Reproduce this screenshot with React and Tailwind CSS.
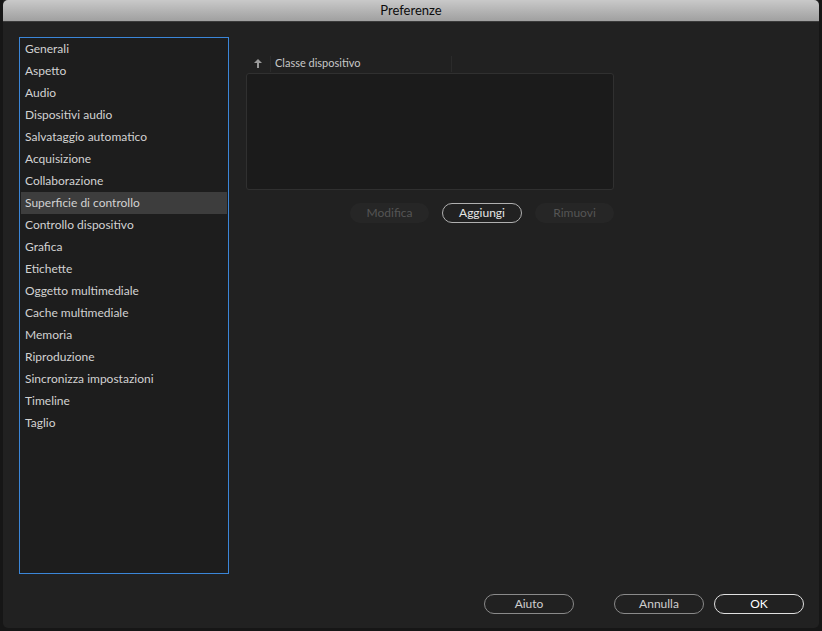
import React, { useState } from "react";

const categories = [
    "Generali",
    "Aspetto",
    "Audio",
    "Dispositivi audio",
    "Salvataggio automatico",
    "Acquisizione",
    "Collaborazione",
    "Superficie di controllo",
    "Controllo dispositivo",
    "Grafica",
    "Etichette",
    "Oggetto multimediale",
    "Cache multimediale",
    "Memoria",
    "Riproduzione",
    "Sincronizza impostazioni",
    "Timeline",
    "Taglio",
];

const PillButton = ({ label, variant = "normal", className = "" }) => {
    const styles = {
        normal: "border border-[#8a8a8a] text-[#cfcfcf]",
        strong: "border border-[#e0e0e0] text-white",
        disabled: "bg-[#262626] text-[#555555]",
    };
    return (
        <button
            className={`h-[20px] rounded-full text-[12px] leading-none flex items-center justify-center ${styles[variant]} ${className}`}
        >
            {label}
        </button>
    );
};

const App = () => {
    const [selected, setSelected] = useState("Superficie di controllo");

    return (
        <div
            className="w-[822px] h-[631px] bg-[#161616] flex px-[3px] overflow-hidden"
            style={{ fontFamily: "Lato, 'Open Sans', sans-serif" }}
        >
            <div className="flex-1 h-[628px] flex flex-col bg-[#212121] rounded-b-[5px]">
                {/* Barra del titolo */}
                <div className="h-[22px] rounded-t-[5px] bg-gradient-to-b from-[#c9c9c9] to-[#a0a0a0] border-b border-[#3a3a3a] flex items-center justify-center">
                    <span className="text-[13px] text-[#0c0c0c]">Preferenze</span>
                </div>

                <div className="flex-1 flex flex-col pt-[15px] pb-[14px]">
                    <div className="flex flex-1">
                        {/* Lista categorie */}
                        <div className="ml-[16px] w-[210px] h-[537px] border border-[#3b86d8] bg-[#1d1d1d] px-[1px]">
                            {categories.map((category) => (
                                <div
                                    key={category}
                                    onClick={() => setSelected(category)}
                                    className={`h-[22px] flex items-center pl-[4px] text-[12px] text-[#d2d2d2] cursor-default ${
                                        selected === category ? "bg-[#3d3d3d]" : ""
                                    }`}
                                >
                                    {category}
                                </div>
                            ))}
                        </div>

                        {/* Pannello destro */}
                        <div className="ml-[17px] w-[368px] pt-[18px]">
                            <div className="h-[17px] flex items-center">
                                <div className="w-[24px] flex justify-center">
                                    <svg width="8" height="9" viewBox="0 0 8 9">
                                        <path d="M4 0 L8 4 L5 4 L5 9 L3 9 L3 4 L0 4 Z" fill="#9a9a9a" />
                                    </svg>
                                </div>
                                <div className="w-px h-[16px] bg-[#2b2b2b]" />
                                <span className="pl-[4px] text-[11px] text-[#c8c8c8] w-[180px]">
                                    Classe dispositivo
                                </span>
                                <div className="w-px h-[16px] bg-[#2b2b2b]" />
                            </div>
                            <div className="mt-[1px] h-[117px] rounded-[3px] border border-[#303030] bg-[#1b1b1b]" />
                            <div className="mt-[13px] flex justify-end gap-[13px]">
                                <PillButton label="Modifica" variant="disabled" className="w-[79px]" />
                                <PillButton label="Aggiungi" variant="normal" className="w-[80px] border-[#b0b0b0] text-[#e6e6e6]" />
                                <PillButton label="Rimuovi" variant="disabled" className="w-[79px]" />
                            </div>
                        </div>
                    </div>

                    {/* Pulsanti in basso */}
                    <div className="flex justify-end items-center pr-[15px] mt-[20px]">
                        <PillButton label="Aiuto" className="w-[90px]" />
                        <PillButton label="Annulla" className="w-[90px] ml-[40px]" />
                        <PillButton label="OK" variant="strong" className="w-[90px] ml-[10px]" />
                    </div>
                </div>
            </div>
        </div>
    );
};

export default App;
